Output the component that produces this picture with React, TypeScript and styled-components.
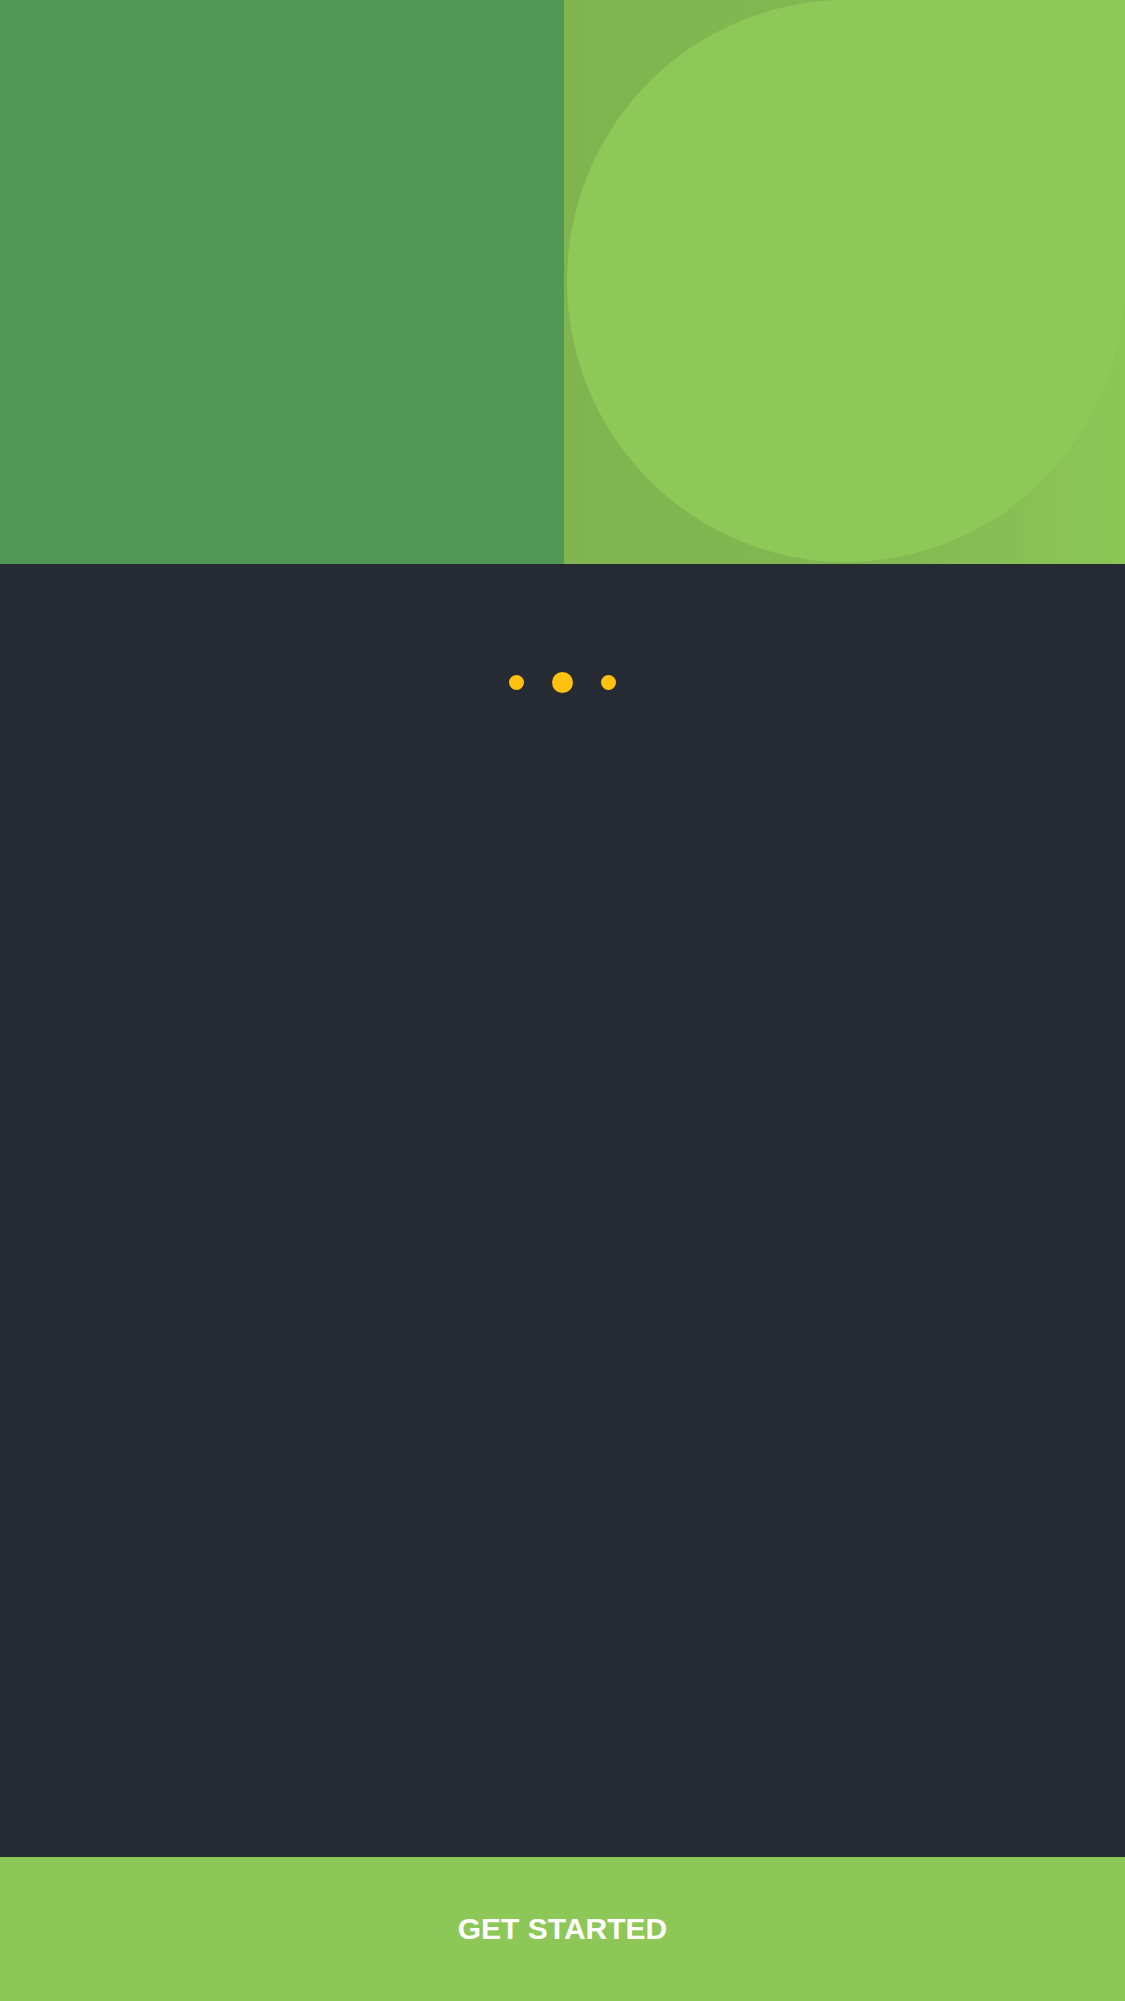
import React from "react";
import styled, { createGlobalStyle } from "styled-components";

const Global = createGlobalStyle`
  html, body { margin: 0; padding: 0; background: #262a33; }
  body { font-family: "Liberation Sans", Arial, sans-serif; }
  * { box-sizing: border-box; }
`;

const Page = styled.div`
  width: 1125px;
  height: 2001px;
  display: flex;
  flex-direction: column;
  background: #262a33;
  overflow: hidden;
`;

const Hero = styled.div`
  height: 564px;
  display: grid;
  grid-template-columns: 564px 1fr;
`;

const LeftTile = styled.div`
  background: #519856;
`;

const RightTile = styled.div`
  display: flex;
  padding: 0 0 2px 3px;
  background: linear-gradient(to right, #80b44f 0%, #84b951 60%, #8cc657 100%);
`;

const Blob = styled.div`
  flex: 1;
  background: #8ec858;
  border-radius: 50% 0 50% 50%;
`;

const Main = styled.div`
  flex: 1;
  display: flex;
  flex-direction: column;
  align-items: center;
  padding-top: 108px;
`;

const Dots = styled.div`
  display: flex;
  align-items: center;
  gap: 28px;
  height: 21px;
`;

const Dot = styled.span<{ $size: number }>`
  display: block;
  width: ${(p) => p.$size}px;
  height: ${(p) => p.$size}px;
  border-radius: 50%;
  background: #fec10d;
`;

const StartButton = styled.button`
  height: 144px;
  width: 100%;
  border: none;
  margin: 0;
  background: #8dc757;
  color: #ffffff;
  font-family: "Liberation Sans", Arial, sans-serif;
  font-weight: 700;
  font-size: 30px;
  letter-spacing: 0;
  display: flex;
  align-items: center;
  justify-content: center;
  cursor: pointer;
`;

export default function App() {
  return (
    <>
      <Global />
      <Page>
        <Hero>
          <LeftTile />
          <RightTile>
            <Blob />
          </RightTile>
        </Hero>
        <Main>
          <Dots>
            <Dot $size={15} />
            <Dot $size={21} />
            <Dot $size={15} />
          </Dots>
        </Main>
        <StartButton>GET STARTED</StartButton>
      </Page>
    </>
  );
}
